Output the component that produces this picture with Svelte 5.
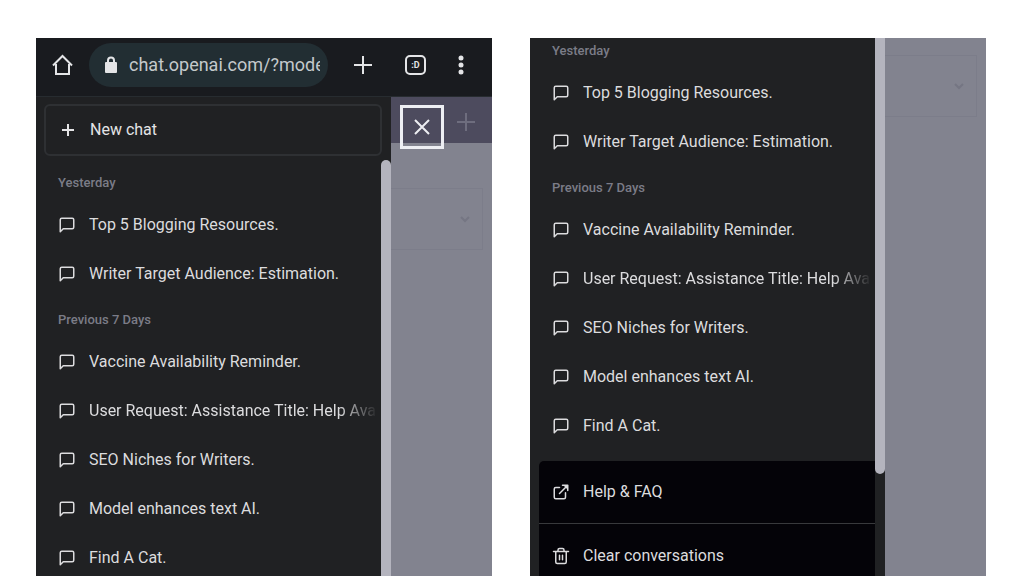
<script>
  const groups = [
    { label: 'Yesterday', chats: ['Top 5 Blogging Resources.', 'Writer Target Audience: Estimation.'] },
    {
      label: 'Previous 7 Days',
      chats: [
        'Vaccine Availability Reminder.',
        'User Request: Assistance Title: Help Ava',
        'SEO Niches for Writers.',
        'Model enhances text AI.',
        'Find A Cat.'
      ]
    }
  ];
  let address = $state('chat.openai.com/?mode');
</script>

{#snippet history()}
  {#each groups as group}
    <section>
      <h2>{group.label}</h2>
      <ul>
        {#each group.chats as chat}
          <li>
            <a class="chat" href="#chat">
              <svg class="icon" viewBox="0 0 24 24"><path d="M21 15a2 2 0 0 1-2 2H7l-4 4V5a2 2 0 0 1 2-2h14a2 2 0 0 1 2 2z" /></svg>
              <span class="title" class:long={chat.length > 36}>{chat}</span>
            </a>
          </li>
        {/each}
      </ul>
    </section>
  {/each}
{/snippet}

{#snippet model()}
  <div class="model">
    <select aria-label="Model"><option></option></select>
    <svg class="chevron" viewBox="0 0 12 12"><path d="M2 4l4 4 4-4" /></svg>
  </div>
{/snippet}

<main>
  <article class="phone">
    <header class="browser">
      <button aria-label="Home">
        <svg width="22" height="22" viewBox="0 0 22 22"><path d="M4 10v10h13V10M1 11.500L10.500 2l9.500 9.500" /></svg>
      </button>
      <div class="address">
        <svg width="14" height="18" viewBox="0 0 14 18"><path class="solid" d="M2 6h10a1 1 0 0 1 1 1v9a1 1 0 0 1-1 1H2a1 1 0 0 1-1-1V7a1 1 0 0 1 1-1z" /><path class="shackle" d="M4 7V4.500a3 3 0 0 1 6 0V7" /></svg>
        <input type="text" aria-label="Address" bind:value={address} />
      </div>
      <div class="tools">
        <button aria-label="New tab">
          <svg width="20" height="20" viewBox="0 0 20 20"><path d="M10 1v18M1 10h18" /></svg>
        </button>
        <button class="tabs" aria-label="Tabs">:D</button>
        <button aria-label="Menu">
          <svg width="6" height="20" viewBox="0 0 6 20"><g class="solid"><circle cx="3" cy="3" r="2.500" /><circle cx="3" cy="10" r="2.500" /><circle cx="3" cy="17" r="2.500" /></g></svg>
        </button>
      </div>
    </header>
    <div class="body">
      <div class="drawer">
        <button class="new">
          <svg width="14" height="14" viewBox="0 0 14 14"><path d="M7 1v12M1 7h12" /></svg>
          New chat
        </button>
        <div class="scroll">
          <nav>{@render history()}</nav>
          <div class="thumb top"></div>
        </div>
      </div>
      <div class="backdrop">
        <div class="bar">
          <button class="close" aria-label="Close sidebar">
            <svg width="18" height="18" viewBox="0 0 18 18"><path d="M2 2l14 14M16 2L2 16" /></svg>
          </button>
          <button class="faint" aria-label="Start chat">
            <svg width="18" height="18" viewBox="0 0 18 18"><path d="M9 0v18M0 9h18" /></svg>
          </button>
        </div>
        {@render model()}
      </div>
    </div>
  </article>

  <article class="phone">
    <div class="body">
      <div class="drawer">
        <div class="scroll scrolled">
          <nav>
            {@render history()}
            <div class="actions">
              <a href="#help">
                <svg class="icon" viewBox="0 0 24 24"><path d="M18 13v6a2 2 0 0 1-2 2H5a2 2 0 0 1-2-2V8a2 2 0 0 1 2-2h5M14 3h7v7M10 14L21 3" /><path class="solid" d="M15 3h6v6z" /></svg>
                Help &amp; FAQ
              </a>
              <button>
                <svg class="icon" viewBox="0 0 24 24"><path d="M2 6h20M19 6v14a2 2 0 0 1-2 2H7a2 2 0 0 1-2-2V6m3 0V4a2 2 0 0 1 2-2h4a2 2 0 0 1 2 2v2M10 11v6M14 11v6" /></svg>
                Clear conversations
              </button>
            </div>
          </nav>
          <div class="thumb bottom"></div>
        </div>
      </div>
      <div class="backdrop low">
        {@render model()}
      </div>
    </div>
  </article>
</main>

<style>
  :global(body) {
    margin: 0;
    background: #fff;
  }
  main {
    display: grid;
    grid-template-columns: 1fr 1fr;
    gap: 38px;
    height: 100vh;
    padding: 38px 38px 0 36px;
    box-sizing: border-box;
    overflow: hidden;
    color: #dcdcde;
    font: 400 16px/20px Roboto, "Liberation Sans", sans-serif;
  }
  button, select, input {
    margin: 0;
    padding: 0;
    border: 0;
    background: none;
    color: inherit;
    font: inherit;
  }
  svg {
    display: block;
    flex: none;
    fill: none;
    stroke: currentColor;
    stroke-width: 2;
  }
  .solid {
    fill: currentColor;
    stroke: none;
  }
  .phone {
    display: flex;
    flex-direction: column;
    min-width: 0;
    min-height: 0;
    background: #202123;
  }
  .browser {
    display: flex;
    align-items: center;
    padding: 5px 28px 9px 16px;
    background: #191b1f;
    border-bottom: 1px solid #272c30;
    color: #e4e5e7;
  }
  .address {
    display: flex;
    align-items: center;
    flex: 1;
    gap: 11px;
    min-width: 0;
    height: 44px;
    margin: 0 25px 0 15px;
    padding: 0 8px 0 15px;
    box-sizing: border-box;
    border-radius: 22px;
    background: #222e33;
  }
  .address input {
    flex: 1;
    min-width: 0;
    color: #c4c9cb;
    font: 400 18px/24px Roboto, sans-serif;
  }
  .tools {
    display: flex;
    align-items: center;
    gap: 32px;
  }
  .tabs {
    width: 21px;
    height: 20px;
    border: 2px solid;
    border-radius: 5px;
    box-sizing: border-box;
    font: 700 9px/14px Roboto, sans-serif;
  }
  .body {
    display: grid;
    grid-template-columns: 355fr 101fr;
    flex: 1;
    min-height: 0;
  }
  .drawer {
    display: flex;
    flex-direction: column;
    min-width: 0;
    min-height: 0;
  }
  .new {
    display: flex;
    align-items: center;
    gap: 15px;
    height: 52px;
    margin: 7px 9px 4px 8px;
    padding: 0 15px;
    border: 2px solid #2e3033;
    border-radius: 6px;
    color: #e4e4e6;
  }
  .scroll {
    display: flex;
    flex: 1;
    min-height: 0;
    overflow: hidden;
  }
  nav {
    flex: 1;
    min-width: 0;
  }
  .scrolled nav {
    margin-top: -10px;
  }
  h2 {
    margin: 0;
    padding: 13px 22px 7px;
    color: #7b7c87;
    font-size: 13px;
    font-weight: 500;
    line-height: 20px;
  }
  section + section h2 {
    padding-top: 12px;
  }
  ul {
    margin: 0;
    padding: 0;
    list-style: none;
  }
  .chat {
    display: flex;
    align-items: center;
    gap: 13px;
    height: 49px;
    padding: 0 3px 0 22px;
    color: inherit;
    text-decoration: none;
  }
  .icon {
    width: 18px;
    height: 18px;
    stroke-linejoin: round;
    stroke-linecap: round;
  }
  .title {
    flex: 1;
    min-width: 0;
    overflow: hidden;
    white-space: nowrap;
  }
  .long {
    mask-image: linear-gradient(to left, transparent, #000 40px);
  }
  .thumb {
    width: 10px;
    background: #b4b4be;
  }
  .top {
    border-radius: 5px 5px 0 0;
  }
  .bottom {
    height: 81%;
    border-radius: 0 0 5px 5px;
  }
  .actions {
    margin: 11px 0 0 9px;
    border-radius: 5px 0 0 0;
    background: #040308;
  }
  .actions a,
  .actions button {
    display: flex;
    align-items: center;
    gap: 13px;
    width: 100%;
    height: 63px;
    padding: 0 13px;
    box-sizing: border-box;
    color: inherit;
    text-decoration: none;
  }
  .actions a {
    border-bottom: 1px solid #38393c;
  }
  .backdrop {
    background: #82838f;
  }
  .low {
    padding-top: 17px;
  }
  .bar {
    display: flex;
    gap: 13px;
    height: 46px;
    margin-bottom: 45px;
    padding-left: 9px;
    background: #4d4b5e;
  }
  .close {
    display: grid;
    place-items: center;
    flex: none;
    width: 44px;
    height: 44px;
    margin-top: 8px;
    border: 3px solid #edeef3;
    color: #edeef3;
  }
  .faint {
    height: 50px;
    color: #6e6d7e;
  }
  .model {
    display: grid;
    align-items: center;
    height: 60px;
    margin-right: 9px;
    border: 1px solid #7c7d8a;
    border-left: 0;
  }
  .model select {
    grid-area: 1 / 1;
    width: 100%;
    height: 100%;
    appearance: none;
  }
  .chevron {
    grid-area: 1 / 1;
    justify-self: end;
    width: 12px;
    height: 12px;
    margin-right: 11px;
    color: #757683;
    pointer-events: none;
  }
</style>
